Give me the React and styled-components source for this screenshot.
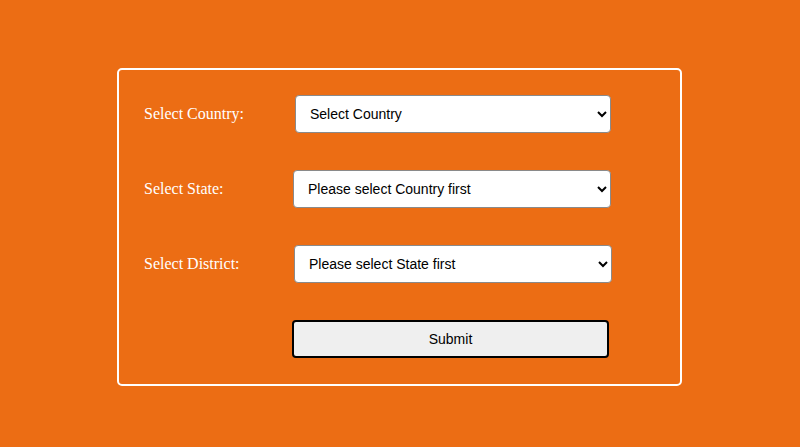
import styled, { createGlobalStyle } from "styled-components";

const GlobalStyle = createGlobalStyle`
  html, body {
    margin: 0;
    padding: 0;
    background: #ec6d14;
  }
  body {
    font-family: "Liberation Serif", "Times New Roman", serif;
  }
`;

const Page = styled.div`
  width: 800px;
  height: 447px;
  display: flex;
  justify-content: center;
  align-items: flex-start;
  padding-top: 68px;
  box-sizing: border-box;
`;

const Form = styled.form`
  width: 565px;
  box-sizing: border-box;
  border: 2px solid #ffffff;
  border-radius: 5px;
  padding: 25px 69px 26px 25px;
  display: flex;
  flex-direction: column;
  gap: 37px;
  margin-left: -1px;
`;

const Row = styled.div`
  display: grid;
  grid-template-columns: 150px 1fr;
  align-items: center;
`;

const Label = styled.label`
  color: #ffffff;
  font-size: 16px;
  font-family: "Liberation Serif", "Times New Roman", serif;
`;

const Select = styled.select`
  height: 38px;
  width: ${(p) => p.$width}px;
  margin-left: ${(p) => p.$offset}px;
  box-sizing: border-box;
  border: 1px solid #8a8a8a;
  border-radius: 4px;
  background: #ffffff;
  color: #000000;
  font-family: "Liberation Sans", Arial, sans-serif;
  font-size: 14px;
  padding-left: 10px;
`;

const Button = styled.button`
  grid-column: 2;
  height: 38px;
  width: 317px;
  margin-left: -2px;
  box-sizing: border-box;
  border: 2px solid #000000;
  border-radius: 4px;
  background: #efefef;
  color: #000000;
  font-family: "Liberation Sans", Arial, sans-serif;
  font-size: 14px;
`;

export default function App() {
  return (
    <>
      <GlobalStyle />
      <Page>
        <Form onSubmit={(e) => e.preventDefault()}>
          <Row>
            <Label>Select Country:</Label>
            <Select $width={316} $offset={1} defaultValue="">
              <option value="">Select Country</option>
            </Select>
          </Row>
          <Row>
            <Label>Select State:</Label>
            <Select $width={318} $offset={-1} defaultValue="">
              <option value="">Please select Country first</option>
            </Select>
          </Row>
          <Row>
            <Label>Select District:</Label>
            <Select $width={318} $offset={0} defaultValue="">
              <option value="">Please select State first</option>
            </Select>
          </Row>
          <Row>
            <Button type="submit">Submit</Button>
          </Row>
        </Form>
      </Page>
    </>
  );
}
